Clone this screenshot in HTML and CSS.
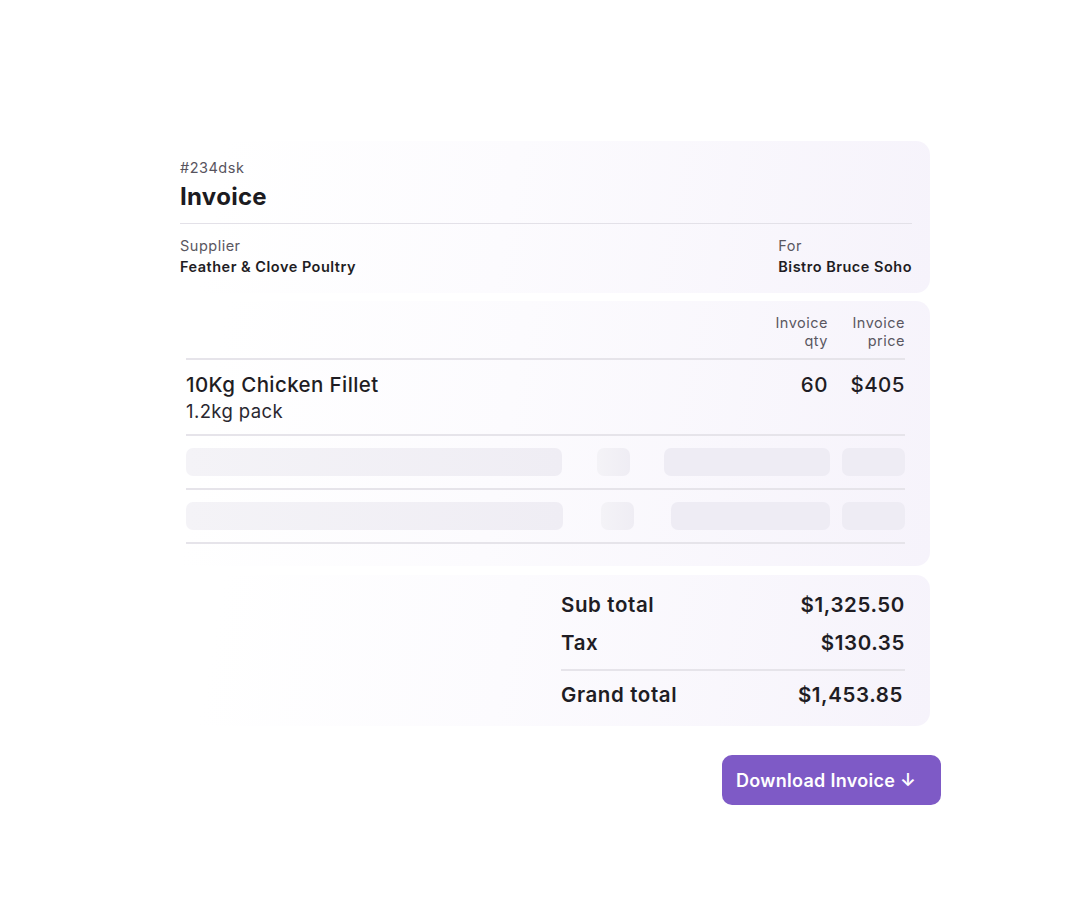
FILE: index.html
```html
<!DOCTYPE html>
<html lang="en">
<head>
<meta charset="utf-8">
<title>Invoice</title>
<link rel="stylesheet" href="styles.css">
</head>
<body>
<main class="wrap">
  <section class="card head-card">
    <div class="ref">#234dsk</div>
    <h1 class="title">Invoice</h1>
    <div class="parties">
      <div class="party">
        <div class="label">Supplier</div>
        <div class="name">Feather &amp; Clove Poultry</div>
      </div>
      <div class="party">
        <div class="label">For</div>
        <div class="name">Bistro Bruce Soho</div>
      </div>
    </div>
  </section>

  <section class="card table-card">
    <div class="thead">
      <div class="th-spacer"></div>
      <div class="th qty">Invoice<br>qty</div>
      <div class="th price">Invoice<br>price</div>
    </div>
    <div class="row item">
      <div class="item-name">
        <div class="prod">10Kg Chicken Fillet</div>
        <div class="pack">1.2kg pack</div>
      </div>
      <div class="num qty-val">60</div>
      <div class="num price-val">$405</div>
    </div>
    <div class="row skel">
      <span class="bar b1"></span>
      <span class="bar b2"></span>
      <span class="bar b3"></span>
      <span class="bar b4"></span>
    </div>
    <div class="row skel">
      <span class="bar b1"></span>
      <span class="bar b2 b2b"></span>
      <span class="bar b3 b3b"></span>
      <span class="bar b4"></span>
    </div>
  </section>

  <section class="card totals-card">
    <div class="totals">
      <div class="trow"><span>Sub total</span><span>$1,325.50</span></div>
      <div class="trow"><span>Tax</span><span>$130.35</span></div>
      <div class="trow grand"><span>Grand total</span><span class="gval">$1,453.85</span></div>
    </div>
  </section>

  <button class="download" type="button">Download Invoice ↓</button>
</main>
</body>
</html>
```

FILE: styles.css
```css
* { box-sizing: border-box; }
html, body { margin: 0; padding: 0; background: #ffffff; }
body {
  font-family: Inter, "Noto Sans", "Liberation Sans", sans-serif;
  color: #1f1d24;
  -webkit-font-smoothing: antialiased;
}
.wrap {
  width: 781px;
  margin: 141px 0 0 160px;
  display: flex;
  flex-direction: column;
  align-items: flex-start;
}
.card {
  width: 770px;
  border-radius: 14px;
  background: linear-gradient(100deg, #ffffff 8%, #fcfbfe 45%, #f6f3fb 100%);
}
.head-card {
  padding: 17px 18px 15px 20px;
}
.ref {
  font-size: 14.5px;
  line-height: 20px;
  letter-spacing: 0.5px;
  color: #57545e;
}
.title {
  margin: 4px 0 0;
  font-size: 24px;
  line-height: 30px;
  font-weight: 700;
  letter-spacing: 0.3px;
  color: #1c1b21;
  padding-bottom: 11px;
  border-bottom: 1px solid #e3e1e8;
}
.parties {
  display: flex;
  justify-content: space-between;
  margin-top: 12px;
}
.label {
  font-size: 14.5px;
  line-height: 20px;
  letter-spacing: 0.5px;
  color: #5a5761;
}
.name {
  font-size: 14.5px;
  line-height: 22px;
  letter-spacing: 0.5px;
  font-weight: 600;
  color: #1f1d24;
}
.table-card {
  margin-top: 8px;
  padding: 13px 25px 22px 26px;
}
.thead {
  display: flex;
  padding-bottom: 8px;
  border-bottom: 2px solid #e6e4ea;
}
.th-spacer { flex: 1; }
.th {
  font-size: 14.5px;
  line-height: 18px;
  letter-spacing: 0.5px;
  color: #5a5761;
  text-align: right;
}
.th.qty { width: 80px; }
.th.price { width: 77px; }
.row {
  display: flex;
  align-items: flex-start;
  border-bottom: 2px solid #e6e4ea;
}
.item { padding: 12px 0 10px; }
.item-name { flex: 1; }
.prod {
  font-size: 20.5px;
  line-height: 26px;
  font-weight: 500;
  letter-spacing: 0.4px;
  color: #1f1d24;
}
.pack {
  font-size: 18.5px;
  line-height: 26px;
  letter-spacing: 0.4px;
  color: #2a2830;
}
.num {
  font-size: 20.5px;
  line-height: 26px;
  font-weight: 500;
  letter-spacing: 0.5px;
  text-align: right;
}
.qty-val { width: 80px; }
.price-val { width: 77px; }
.skel {
  padding: 12px 0 12px;
  align-items: center;
}
.bar {
  display: block;
  height: 28px;
  border-radius: 7px;
  background: linear-gradient(90deg, #f4f3f7, #efedf4);
}
.b1 { width: 377px; }
.b2 { width: 33px; margin-left: 35px; }
.b3 { width: 166px; margin-left: 34px; background: #eeecf4; }
.b4 { width: 63px; margin-left: 12px; background: #eeecf4; }
.b2b { margin-left: 38px; }
.b3b { width: 159px; margin-left: 37px; }
.totals-card {
  margin-top: 9px;
  padding: 16px 25px 17px 401px;
}
.totals { display: flex; flex-direction: column; }
.trow {
  display: flex;
  justify-content: space-between;
  font-size: 20.5px;
  line-height: 28px;
  font-weight: 600;
  letter-spacing: 0.6px;
  color: #1f1d24;
}
.trow + .trow { margin-top: 10px; }
.trow.grand {
  margin-top: 12px;
  padding-top: 10px;
  border-top: 2px solid #e6e4ea;
}
.gval { margin-right: 2px; }
.download {
  align-self: flex-end;
  margin-top: 29px;
  width: 219px;
  height: 50px;
  border: none;
  border-radius: 10px;
  background: #7e5ac6;
  color: #ffffff;
  font-family: Inter, "Noto Sans", "Liberation Sans", sans-serif;
  font-size: 18px;
  font-weight: 600;
  letter-spacing: 0.3px;
  text-align: left;
  padding: 0 0 0 14px;
}
```
